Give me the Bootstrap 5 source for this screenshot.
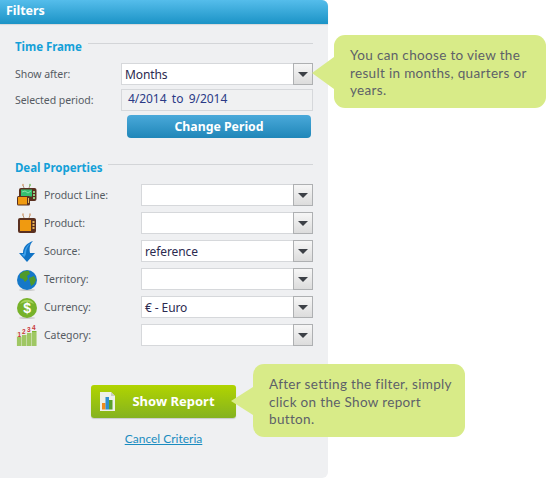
<!DOCTYPE html>
<html lang="en"><head><meta charset="utf-8"><title>Filters</title>
<link href="https://cdn.jsdelivr.net/npm/bootstrap@5.3.0/dist/css/bootstrap.min.css" rel="stylesheet">
<style>
html,body{margin:0;background:#fff;height:479px;overflow:hidden}
body{font-family:"Noto Sans",sans-serif;font-size:10.5px;letter-spacing:-.05px;color:#555b63;line-height:1}
.stage{position:relative;width:553px;height:479px}
.fpanel{width:328px;height:478px;background:#eff0f2;border-radius:0 6px 6px 0;display:flex;flex-direction:column}
.fhead{height:24px;background:linear-gradient(#55bdeb,#1b93c6);border-radius:0 6px 0 0;color:#fff;font:700 12.5px/22px "Noto Sans",sans-serif;padding-left:6px;box-shadow:0 1px 1px #d5d7da}
.fbody{padding:14px 15px 0 15px;display:flex;flex-direction:column}
.legend{display:flex;align-items:flex-start;gap:6px;color:#14a0d8;font:700 11.5px/18px "Noto Sans",sans-serif;height:21px}
.legend::after{content:"";flex:1;border-top:1px solid #d3d5d8;margin-top:5px}
.frow{display:flex;align-items:center;height:22px}
.flabel{width:106px;white-space:nowrap;line-height:20px}
.combo{flex:1;height:22px;display:flex;background:#fff;border:1px solid #d6d8db;font:12px/22px "Noto Sans",sans-serif;letter-spacing:-.1px;color:#2c2a50;min-width:0}
.cval{flex:1;padding-left:3px}
.cbtn{width:20px;margin:-1px -1px -1px 0;background:linear-gradient(#f6f6f6,#dcdcdc);border:1px solid #aeb0b2;display:flex;align-items:center;justify-content:center}
.cbtn::after{content:"";border-style:solid;border-width:5px 5.5px 0;border-color:#3c4046 transparent transparent;margin-top:1px}
.readout{flex:1;height:22px;border:1px solid #d6d8db;background:#f0f1f2;color:#2b3a86;font:12px/18px "Noto Sans",sans-serif;word-spacing:2.3px;padding-left:6px}
.changebtn{margin:4px 2px 0 112px;height:23px;background:linear-gradient(#4aa9da,#1f86b8);border:0;border-radius:4px;color:#fff;font:700 12.3px/23px "Noto Sans",sans-serif;padding:0;text-align:center}
.deal{margin-top:21px;margin-bottom:-2px}
.prow{display:flex;align-items:center;height:22px;margin-top:6px}
.ico{width:22px;height:24px;margin-left:1px;flex:none}
.plabel{width:97px;margin-left:6px;white-space:nowrap;line-height:20px}
.actions{display:flex;flex-direction:column;align-items:center;margin-top:39px;padding-right:1px}
.reportbtn{width:145px;height:33px;background:linear-gradient(#b1d400,#84b220);border:0;border-radius:3px;color:#fff;font:700 13px/33px "Noto Sans",sans-serif;display:flex;align-items:center;padding:0 0 0 8px;box-shadow:0 1px 1px #c8cacc}
.reportbtn span{flex:1;text-align:center;padding-right:5px}
.cancel{margin-top:14px;color:#1a8cc0;font:12px/13px "Lato",sans-serif;letter-spacing:0;text-decoration:underline}
.tip{position:absolute;background:#d8eb88;border-radius:11px;width:212px;height:73px;color:#5d6168;font:13.5px/17.5px "Lato",sans-serif;letter-spacing:.33px;padding:12px 10px 0 16px}
.tip::before{content:"";position:absolute;left:-22px;top:22px;border-style:solid;border-width:16px 22px 16px 0;border-color:transparent #d8eb88 transparent transparent}
.tip1{left:334px;top:35px}
.tip2{left:253px;top:364px}
.tip2::before{top:23px;border-width:14px 22px 14px 0}
</style></head><body>
<div class="stage">
 <div class="fpanel">
  <div class="fhead">Filters</div>
  <div class="fbody">
   <div class="legend">Time Frame</div>
   <div class="frow mt-1"><div class="flabel">Show after:</div><div class="combo"><div class="cval">Months</div><div class="cbtn"></div></div></div>
   <div class="frow mt-1"><div class="flabel">Selected period:</div><div class="readout">4/2014 to 9/2014</div></div>
   <button class="changebtn btn" type="button">Change Period</button>
   <div class="legend deal">Deal Properties</div>
   <div class="prow"><svg class="ico" viewBox="0 0 22 24"><path d="M8 5 7 2M13 5l1-3" stroke="#a98" fill="none"/><ellipse cx="7" cy="2" rx="1" ry="1.200" fill="#d8b090"/><ellipse cx="14" cy="2" rx="1" ry="1.200" fill="#8fc880"/><rect x="3" y="5" width="17.500" height="13" rx="2" fill="#5a3020"/><rect x="5" y="6.500" width="11" height="7" fill="#35c070"/><path d="M6 9l3-1 3 2 3-2" stroke="#a8ecc0" fill="none" stroke-width=".7"/><rect x="17" y="8" width="2" height="2" fill="#8fd080"/><rect x="17" y="11" width="2" height="2" fill="#8fd080"/><rect x="17" y="14" width="2" height="2" fill="#8fd080"/><rect x="1" y="13" width="13" height="9.500" rx="1.500" fill="#5a3020"/><rect x="2" y="14" width="9" height="7.500" fill="#f09a10"/><rect x="12" y="15" width="1" height="5" fill="#e8c060"/></svg><div class="plabel">Product Line:</div><div class="combo"><div class="cval"></div><div class="cbtn"></div></div></div>
   <div class="prow"><svg class="ico" viewBox="0 0 22 24"><path d="M8 7 7 4M13 7l1-3" stroke="#b97" fill="none"/><ellipse cx="7" cy="3.500" rx="1" ry="1.200" fill="#d8b090"/><ellipse cx="14" cy="3.500" rx="1" ry="1.200" fill="#d8b090"/><rect x="2" y="7" width="18" height="15" rx="2" fill="#5a3020"/><rect x="4" y="9" width="11" height="11" fill="#f09a10"/><rect x="16.500" y="10" width="2" height="2" fill="#e8b050"/><rect x="16.500" y="13" width="2" height="2" fill="#e8b050"/><rect x="16.500" y="16" width="2" height="2" fill="#e8b050"/></svg><div class="plabel">Product:</div><div class="combo"><div class="cval">&nbsp;</div><div class="cbtn"></div></div></div>
   <div class="prow"><svg class="ico" viewBox="0 0 22 24"><path d="M17 2C11 4 7 8 7 14H3l8 9 8-9h-5C13 9 14 5 17 2Z" fill="#1173c5"/><path d="M15 4C11 6 8.500 10 8 15H5.500l2.500 3c1-1 2-2 2-4C10 10 12 7 15 4Z" fill="#3da0ea"/></svg><div class="plabel">Source:</div><div class="combo"><div class="cval">reference</div><div class="cbtn"></div></div></div>
   <div class="prow"><svg class="ico" viewBox="0 0 22 24"><ellipse cx="11" cy="23" rx="8" ry="1" fill="#ccc"/><circle cx="11" cy="13" r="10" fill="#1578c8"/><path d="M4 7c3-3 7-4 9-3l1 3-3 2 1 3-3 3-2-3-3-1ZM13 11l5-2 2 4-2 4-3 2-1-4Z" fill="#4f9a2a"/></svg><div class="plabel">Territory:</div><div class="combo"><div class="cval">&nbsp;</div><div class="cbtn"></div></div></div>
   <div class="prow"><svg class="ico" viewBox="0 0 22 24"><ellipse cx="11" cy="23" rx="8" ry="1" fill="#ccc"/><circle cx="11" cy="13" r="10" fill="#77b22a"/><path d="M4 9a8 8 0 0 1 14 0 14 14 0 0 0-14 0Z" fill="#a5d45a"/><text x="11" y="18" text-anchor="middle" font-family="Liberation Sans" font-weight="700" font-size="14" fill="#fff">$</text></svg><div class="plabel">Currency:</div><div class="combo"><div class="cval">€ - Euro</div><div class="cbtn"></div></div></div>
   <div class="prow"><svg class="ico" viewBox="0 0 22 24"><g fill="#7db52f"><rect x="1" y="14" width="4.500" height="9"/><rect x="6" y="12" width="4.500" height="11"/><rect x="11" y="10" width="4.500" height="13"/><rect x="16" y="8" width="4.500" height="15"/></g><path d="M0 22h21M0 20h21M0 18h21M0 16h21M0 14h21M0 12h21M0 10h21" stroke="#dfe8c8" stroke-width=".7"/><g fill="#c8373a" font-family="Liberation Sans" font-weight="700" font-size="6.500"><text x="1.500" y="13.500">1</text><text x="6" y="11">2</text><text x="11" y="9">3</text><text x="16" y="7">4</text></g></svg><div class="plabel">Category:</div><div class="combo"><div class="cval">&nbsp;</div><div class="cbtn"></div></div></div>
   <div class="actions">
    <button class="reportbtn btn" type="button"><svg width="17" height="21" viewBox="0 0 17 21"><path d="M1 1h11l4 4v15H1Z" fill="#eef0e8"/><path d="M12 1v4h4" fill="#c8ccc0"/><rect x="3" y="12" width="3.500" height="6.500" fill="#f08a1d"/><rect x="6.500" y="6" width="3.500" height="12.500" fill="#2f8fd0"/><rect x="10" y="9" width="3.500" height="9.500" fill="#5aa02a"/></svg><span>Show Report</span></button>
    <a class="cancel" href="#">Cancel Criteria</a>
   </div>
  </div>
 </div>
 <div class="tip tip1">You can choose to view the result in months, quarters or years.</div>
 <div class="tip tip2">After setting the filter, simply click on the Show report button.</div>
</div>
<script src="https://cdn.jsdelivr.net/npm/bootstrap@5.3.0/dist/js/bootstrap.bundle.min.js"></script>
</body></html>
